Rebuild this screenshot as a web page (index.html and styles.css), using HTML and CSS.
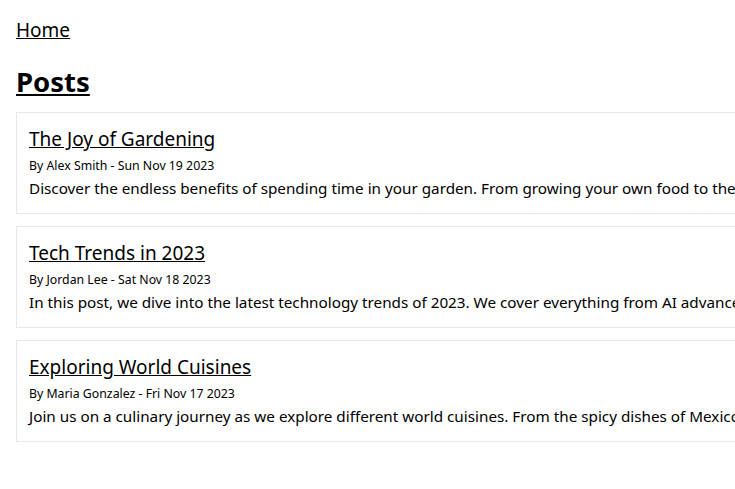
FILE: index.html
```html
<!DOCTYPE html>
<html lang="en">
<head>
<meta charset="utf-8">
<title>Posts</title>
<link rel="stylesheet" href="styles.css">
</head>
<body>
<div class="page">
  <nav class="nav"><a href="#" class="nav-link">Home</a></nav>
  <h1 class="heading"><a href="#">Posts</a></h1>
  <div class="list">
    <article class="card">
      <h2 class="card-title"><a href="#">The Joy of Gardening</a></h2>
      <p class="card-meta">By Alex Smith - Sun Nov 19 2023</p>
      <p class="card-text">Discover the endless benefits of spending time in your garden. From growing your own food to the therapeutic effects of nurturing plants, gardening is a rewarding hobby for everyone.</p>
    </article>
    <article class="card">
      <h2 class="card-title"><a href="#">Tech Trends in 2023</a></h2>
      <p class="card-meta">By Jordan Lee - Sat Nov 18 2023</p>
      <p class="card-text">In this post, we dive into the latest technology trends of 2023. We cover everything from AI advancements to the rise of sustainable tech and what it means for the future.</p>
    </article>
    <article class="card">
      <h2 class="card-title"><a href="#">Exploring World Cuisines</a></h2>
      <p class="card-meta">By Maria Gonzalez - Fri Nov 17 2023</p>
      <p class="card-text">Join us on a culinary journey as we explore different world cuisines. From the spicy dishes of Mexico to the delicate flavors of Japan, there is something for every palate.</p>
    </article>
  </div>
</div>
</body>
</html>
```
FILE: styles.css
```css
* { box-sizing: border-box; }
html, body { margin: 0; padding: 0; background: #fff; }
body {
  font-family: "Noto Sans", "Open Sans", sans-serif;
  color: #000;
  overflow: hidden;
}
a { color: inherit; text-decoration: underline; }
.page {
  padding: 16px;
  display: flex;
  flex-direction: column;
  align-items: flex-start;
}
.nav { font-size: 19px; line-height: 28px; }
.heading {
  margin: 20px 0 12px;
  font-size: 27.5px;
  line-height: 36px;
  font-weight: 700;
}
.list {
  display: flex;
  flex-direction: column;
  gap: 12px;
}
.card {
  border: 1px solid #e5e7eb;
  padding: 12px 12px 13px;
  white-space: nowrap;
  width: max-content;
}
.card-title {
  margin: 0 0 4px;
  font-size: 19px;
  line-height: 28px;
  font-weight: 400;
}
.card-meta { margin: 0 0 1px; font-size: 12.3px; line-height: 18px; }
.card-text { margin: 0; font-size: 15.25px; line-height: 24px; }
```
